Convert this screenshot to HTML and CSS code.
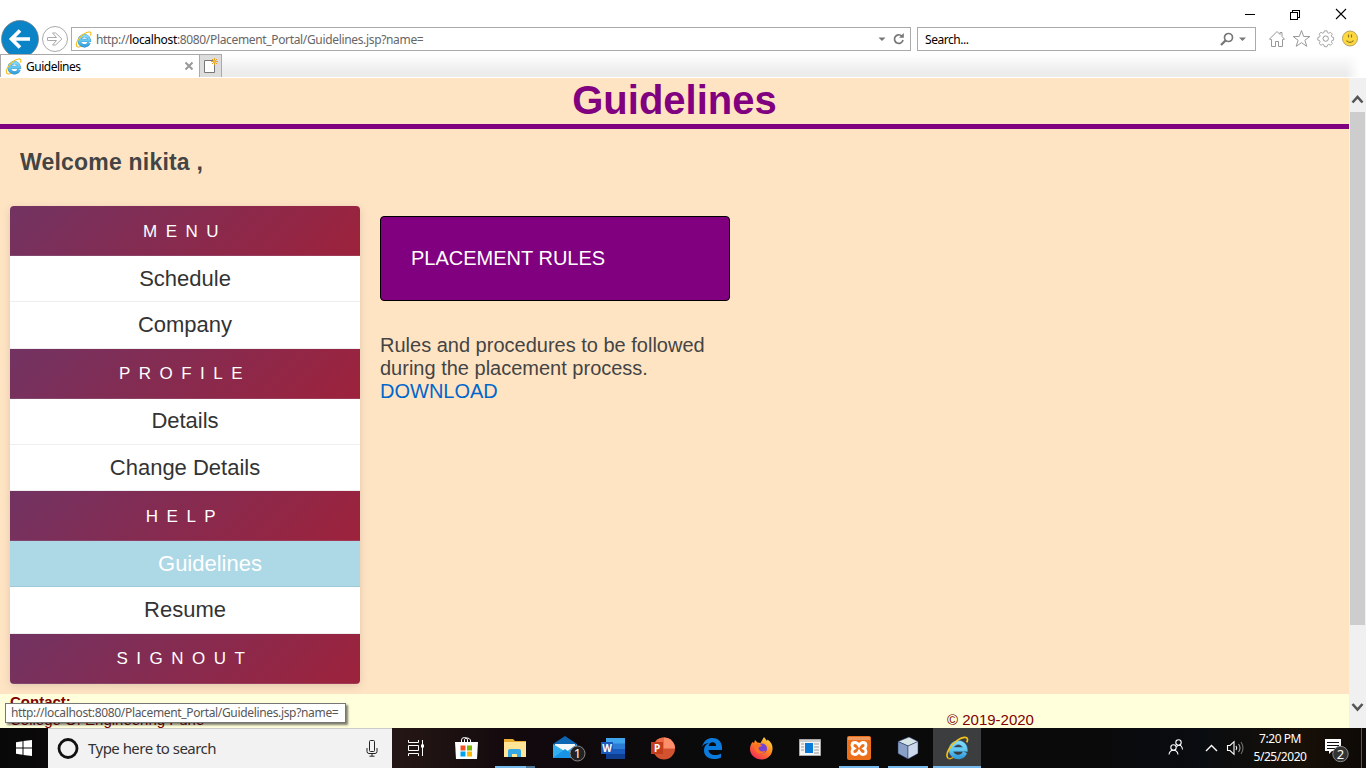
FILE: index.html
```html
<!DOCTYPE html>
<html lang="en">
<head>
<meta charset="utf-8">
<title>Guidelines</title>
<link rel="stylesheet" href="styles.css">
</head>
<body>
<svg class="defs" width="0" height="0" aria-hidden="true">
  <defs>
    <linearGradient id="ie-blue" x1="0" y1="0" x2="0" y2="1"><stop offset="0" stop-color="#7fd8f8"/><stop offset=".5" stop-color="#63c8f0"/><stop offset="1" stop-color="#35a0e0"/></linearGradient>
    <linearGradient id="fox" x1=".9" y1="0" x2=".2" y2="1"><stop offset="0" stop-color="#ffe24a"/><stop offset=".45" stop-color="#ff8a1e"/><stop offset="1" stop-color="#f3245c"/></linearGradient>
    <symbol id="ie" viewBox="0 0 16 16">
      <path d="M13.300 10.900A4.800 4.800 0 1 1 13.600 8.900H5" fill="none" stroke="#3d8fc4" stroke-width="3.100"/>
      <path d="M13.300 10.900A4.800 4.800 0 1 1 13.600 8.900H5" fill="none" stroke="url(#ie-blue)" stroke-width="2.400"/>
      <path d="M2.200 15C-.6 12.500 3.800 5.600 8.600 2.600 11.800.6 14.600.3 15 2c.1.700-.1 1.400-.5 2.200" fill="none" stroke="#f3c21c" stroke-width="1.100"/>
      <path d="M2.200 15c.9.400 2.200 0 3.400-.8" fill="none" stroke="#e0a818" stroke-width=".9"/>
    </symbol>
  </defs>
</svg>

<header class="chrome">
  <div class="titlebar">
    <svg width="110" height="16" viewBox="0 0 110 16" fill="none" stroke="#000" shape-rendering="crispEdges"><path d="M0 8.500h10M45.500 6.500h7v7h-7zM47.500 6v-2h7v7h-2"/><path d="M91 3l10 10M101 3L91 13" shape-rendering="auto" stroke-width="1.100"/></svg>
  </div>
  <div class="navrow">
    <svg class="back" width="40" height="38" viewBox="0 0 40 38"><circle cx="20" cy="19" r="18.500" fill="#0a84c6" stroke="#777" stroke-width=".7"/><path d="M30 19H13M20 10.500L11.500 19l8.500 8.500" fill="none" stroke="#fff" stroke-width="3.700"/></svg>
    <svg class="forward" width="28" height="28" viewBox="0 0 28 28" fill="none" stroke="#aaa"><circle cx="13" cy="14" r="12.500"/><path d="M5.500 12.500h9l-4-4.500h3.200l6.200 6-6.200 6h-3.200l4-4.500h-9z"/></svg>
    <div class="address">
      <svg width="17" height="17"><use href="#ie"/></svg>
      <span class="url">http://<b>localhost</b>:8080/Placement_Portal/Guidelines.jsp?name=</span>
      <svg width="30" height="16" viewBox="0 0 30 16"><path d="M2.500 6.500h7L6 10z" fill="#777"/><path d="M26 5.200A4.300 4.300 0 1 0 27 9" fill="none" stroke="#777" stroke-width="1.700"/><path d="M23 6.800h4.800V2z" fill="#777"/></svg>
    </div>
    <div class="search">
      <span>Search...</span>
      <svg width="30" height="16" viewBox="0 0 30 16"><circle cx="8.500" cy="6.500" r="4" fill="none" stroke="#777" stroke-width="1.700"/><path d="M5.500 9.500L1 14" stroke="#777" stroke-width="2.300"/><path d="M19 6.500h7L22.500 10z" fill="#777"/></svg>
    </div>
    <svg class="tools" width="92" height="20" viewBox="0 0 92 20" fill="none" stroke="#999">
      <path d="M3.500 10.500L1.500 10.200 9 2.500l3 3v-2h2v4l2.500 2.700-2 .3v7h-4v-5h-3v5h-4z"/>
      <path d="M33.500 1.500l2.200 6h6.100l-4.900 3.800 1.900 6-5.300-3.600-5.300 3.600 1.900-6-4.900-3.800h6.100z"/>
      <path d="M56.500 2h3l.5 2 1.500.7 1.900-1.100 2.100 2.100-1.100 1.900.6 1.400 2 .5v3l-2 .5-.6 1.400 1.100 1.900-2.100 2.100-1.900-1.100-1.500.7-.5 2h-3l-.5-2-1.500-.7-1.900 1.100-2.100-2.100 1.100-1.900-.6-1.400-2-.5v-3l2-.5.6-1.400-1.100-1.900 2.100-2.100 1.900 1.100L56 4z" transform="translate(6.700 .1) scale(.88)"/><circle cx="57.700" cy="9.600" r="2.700"/>
      <circle cx="82" cy="9.500" r="7.500" fill="#ffd83d" stroke="#b5a36a"/><path d="M80.500 5.500v3M83.500 5.500v3M78.500 11.500c1.500 2.500 5.500 2.500 7 0" stroke="#8b7429" stroke-width="1.200"/>
    </svg>
  </div>
  <div class="tabs">
    <div class="tab">
      <svg width="17" height="17"><use href="#ie"/></svg>
      <span>Guidelines</span>
      <svg width="10" height="10" viewBox="0 0 10 10"><path d="M1.500 1.500l7 7M8.500 1.500l-7 7" stroke="#999" stroke-width="2"/></svg>
    </div>
    <div class="newtab"><svg width="18" height="18" viewBox="0 0 18 18"><path d="M2.500 3.500h10v12h-10z" fill="#fff" stroke="#777"/><path d="M12.500 1v7M9 4.500h7M10 2l5 5M15 2l-5 5" stroke="#e8a020" stroke-width="1"/><circle cx="12.500" cy="4.500" r="1.600" fill="#f5b83a"/></svg></div>
  </div>
</header>

<div class="viewport">
  <main class="page">
    <h1 class="title">Guidelines</h1>
    <h2 class="welcome">Welcome nikita ,</h2>
    <div class="columns">
      <nav class="menu">
        <div class="head low">MENU</div>
        <a class="item">Schedule</a>
        <a class="item tall">Company</a>
        <div class="head">PROFILE</div>
        <a class="item raised">Details</a>
        <a class="item">Change Details</a>
        <div class="head low">HELP</div>
        <a class="item active">Guidelines</a>
        <a class="item tall">Resume</a>
        <div class="head">SIGNOUT</div>
      </nav>
      <section class="content">
        <div class="card">PLACEMENT RULES</div>
        <p class="text">Rules and procedures to be followed during the placement process.<br><a class="download">DOWNLOAD</a></p>
      </section>
    </div>
    <footer class="footer">
      <div class="contact"><b>Contact:</b><br>College Of Engineering Pune</div>
      <div class="copy">© 2019-2020</div>
    </footer>
  </main>
  <div class="scrollbar">
    <svg width="17" height="34" viewBox="0 0 17 34"><path d="M3.500 24.500l5-5.500 5 5.500" fill="none" stroke="#555" stroke-width="2.600"/></svg>
    <div class="thumb"></div>
    <svg width="17" height="34" viewBox="0 0 17 34"><path d="M3.500 10l5 5.500 5-5.500" fill="none" stroke="#555" stroke-width="2.600"/></svg>
  </div>
  <div class="status">http://localhost:8080/Placement_Portal/Guidelines.jsp?name=</div>
</div>

<footer class="taskbar">
  <div class="start"><svg width="16" height="16" viewBox="0 0 16 16" fill="#fff"><path d="M0 2.200L6.500 1.300v6.200H0zM7.500 1.100L16 0v7.500H7.500zM0 8.500h6.500v6.200L0 13.800zM7.500 8.500H16V16l-8.500-1.100z"/></svg></div>
  <div class="tasksearch">
    <svg width="22" height="22" viewBox="0 0 22 22"><circle cx="11" cy="10.500" r="9" fill="none" stroke="#111" stroke-width="2.800"/></svg>
    <span>Type here to search</span>
    <svg width="12" height="17" viewBox="0 0 12 17" fill="none" stroke="#222"><rect x="3.500" y=".5" width="5" height="11" rx="1"/><path d="M1 8v3.500q0 2 2 2h6q2 0 2-2V8M6 13.500V16M3.500 16.200h5"/></svg>
  </div>
  <div class="apps">
    <div class="app"><svg width="24" height="24" viewBox="0 0 24 24" fill="none" stroke="#fff"><path d="M3.500 4v2.500h10V4M3.500 20v-2.500h10V20M3.500 9.500h10v5h-10zM17.500 4v16"/><path d="M16 8.500h3v3h-3z" fill="#fff" stroke="none"/></svg></div>
    <div class="app"><svg width="24" height="24" viewBox="0 0 24 24"><path d="M7.500 6.500V4q0-2.500 3-2.500T13.500 4v2.500M10.500 6V3.500q0-1.500 2.500-1.500t3.500 2v2.500" fill="none" stroke="#fff"/><path d="M1 6h23l-1 17H2z" fill="#fff"/><path d="M6.500 9.500h5v5h-5z" fill="#f05022"/><path d="M13 9.500h5v5h-5z" fill="#7db800"/><path d="M6.500 15.500h5v5h-5z" fill="#00a3ee"/><path d="M13 15.500h5v5h-5z" fill="#ffb800"/></svg></div>
    <div class="app open split"><svg width="24" height="24" viewBox="0 0 24 24"><path d="M1 3h9l2 2h11v16H1z" fill="#e9ad32"/><path d="M1 6h22v15H1z" fill="#ffe595"/><path d="M5 21v-6q0-2 2-2h9q2 0 2 2v6h-4v-3H9v3z" fill="#35a8e8"/></svg></div>
    <div class="app mail"><svg width="34" height="28" viewBox="0 0 34 28"><path d="M1 10L13 2l12 8v14H1z" fill="#0d66b4"/><path d="M3 10h20v4l-9 7-11-7z" fill="#f4f7fa"/><path d="M1 10l13 8 11-8v14H1z" fill="#32b0f0"/><path d="M1 24l12-9 12 9z" fill="#1993e6"/><circle cx="25.500" cy="19.500" r="7.500" fill="#222" stroke="#888"/><text x="25.500" y="24" text-anchor="middle" class="badge">1</text></svg></div>
    <div class="app"><svg width="24" height="24" viewBox="0 0 24 24"><path d="M5 2h19v6H5z" fill="#41a5ee"/><path d="M5 7.500h19V13H5z" fill="#2b7cd3"/><path d="M5 13h19v5H5z" fill="#185abd"/><path d="M5 18h19v5H5z" fill="#103f91"/><path d="M0 6h12v12H0z" fill="#185abd"/><text x="6" y="15.500" text-anchor="middle" class="office">W</text></svg></div>
    <div class="app"><svg width="24" height="24" viewBox="0 0 24 24"><circle cx="13" cy="12.500" r="11" fill="#d35230"/><path d="M13 1.500v11h11a11 11 0 0 0-11-11z" fill="#ff8f6b"/><path d="M13 1.500a11 11 0 0 0-11 11h11z" fill="#ed6c47"/><path d="M0 6h12v12H0z" fill="#c43e1c"/><text x="6.200" y="15.500" text-anchor="middle" class="office">P</text></svg></div>
    <div class="app"><svg width="24" height="24" viewBox="0 0 24 24"><path d="M2 11C4 4 8 2 12.500 2 19 2 22 7 22 11v3H8.500c.3 3.500 3.200 5 6.200 5 2.500 0 4.700-.6 6.300-1.600v4c-2 1.200-4.600 1.700-7.200 1.700-6 0-10-3.500-9.800-9 .1-3.700 2.200-6 5-7C5 7.500 3 9 2 11zm6.700-1h7.400c0-2.500-1.300-3.800-3.400-3.800S9 7.700 8.700 10z" fill="#0a7bdc"/></svg></div>
    <div class="app"><svg width="24" height="24" viewBox="0 0 24 24"><path d="M3.500 6l1.500 1 1-3 2.500 2.500 3 .5L15 1l3 4 .5-1.500C22 6 24 9 23.500 13.500c-.6 6-5 10-11 10S1 19 1 13c0-3 1-5 2.500-7z" fill="url(#fox)"/><circle cx="13" cy="12.500" r="5" fill="#7542d8"/><path d="M5 8.500c3-1 6-1 8 1-1 1-2.500 1.500-3.500 2 0 4 4 5 7 3-1.500 4-8 4-10 0-1-2-1.500-4-1.500-6z" fill="#ff751f"/></svg></div>
    <div class="app"><svg width="22" height="18" viewBox="0 0 22 18"><path d="M.5.500h21v16H.5z" fill="#f4f4f4" stroke="#aaa"/><path d="M1 1h20v2H1z" fill="#ccc"/><path d="M6 4h8v10H6z" fill="#087bd8"/><path d="M2 5h3M2 8h3M2 11h3M15 5h5M15 8h5M15 11h5M15 14h5" stroke="#999"/></svg></div>
    <div class="app open"><svg width="24" height="24" viewBox="0 0 24 24"><rect width="24" height="24" rx="2" fill="#ec701b"/><path d="M1 1h22v3H1z" fill="#f09a60"/><path d="M12 9.500C10.500 7 9.500 6.500 8 6.500q-3 0-3 3 0 1.800 2 3-2 1.200-2 3 0 3 3 3c1.500 0 2.500-.5 4-3 1.500 2.500 2.500 3 4 3q3 0 3-3 0-1.800-2-3 2-1.200 2-3 0-3-3-3c-1.500 0-2.500.5-4 3z" fill="none" stroke="#fff" stroke-width="2.800"/></svg></div>
    <div class="app open"><svg width="24" height="24" viewBox="0 0 24 24" stroke="#263566" stroke-width=".5"><path d="M2 5.500L13 1l9 4.500L12 10z" fill="#d6e5e5"/><path d="M2 5.500L12 10v13L2 17.500z" fill="#88a0c6"/><path d="M12 10l10-4.500v12L12 23z" fill="#ccd8ec"/></svg></div>
    <div class="app open current"><svg width="24" height="24"><use href="#ie"/></svg></div>
  </div>
  <div class="tray">
    <svg class="icons" width="75" height="20" viewBox="0 0 75 20" fill="none" stroke="#fff" stroke-width="1.100"><circle cx="5.500" cy="9.500" r="2.700"/><path d="M1 16.500q.5-4.300 4.500-4.300t4.500 4.300"/><circle cx="10.500" cy="4.500" r="2.700"/><path d="M8.500 9q1-1.700 2.800-1.700 2.700 0 3.200 4.200"/><path d="M38 13l5.500-5.500L49 13" stroke-width="1.400"/><path d="M59.500 7.500h2.500l4-3.800v12.600l-4-3.800h-2.500z"/><path d="M68 8q1.500 2 0 4"/><path d="M70.500 6q3 4 0 8" opacity=".65"/><path d="M73 4q4 6 0 12" opacity=".4"/></svg>
    <div class="clock"><span>7:20 PM</span><span>5/25/2020</span></div>
    <svg class="notify" width="26" height="26" viewBox="0 0 26 26"><path d="M1 2h16v12H8l-3 3v-3H1z" fill="#fff"/><path d="M3 5.500h12M3 8.500h12M3 11.500h8" stroke="#111"/><circle cx="16.500" cy="17" r="7.700" fill="#333" stroke="#888"/><text x="16.500" y="21.500" text-anchor="middle" class="badge">2</text></svg>
    <div class="peek"></div>
  </div>
</footer>
</body>
</html>
```
FILE: styles.css
```css
* { box-sizing: border-box; }
body { margin: 0; width: 1366px; height: 768px; overflow: hidden; display: flex; flex-direction: column; background: #fff; font-family: "Liberation Sans", Arial, sans-serif; }
svg { display: block; flex: none; }
.defs { position: absolute; }

/* Browser chrome */
.chrome { height: 78px; flex: none; display: flex; flex-direction: column; font: 12px "Noto Sans", sans-serif; }
.titlebar { height: 27px; flex: none; display: flex; justify-content: flex-end; padding: 6px 11px 0 0; }
.navrow { height: 24px; flex: none; display: flex; align-items: center; margin-bottom: 3px; }
.back { margin-right: 2px; }
.forward { margin-right: 1px; }
.address { width: 840px; height: 24px; border: 1px solid #aaa; display: flex; align-items: center; padding: 0 4px 0 3px; margin-right: 6px; }
.url { flex: 1; margin-left: 4px; color: #666; white-space: nowrap; letter-spacing: -.34px; }
.url b { font-weight: 400; color: #000; }
.search { width: 339px; height: 24px; border: 1px solid #aaa; display: flex; align-items: center; justify-content: space-between; padding: 0 5px 0 7px; }
.search span { letter-spacing: -.45px; }
.tools { margin: -1px 0 0 12px; }
.tabs { height: 23px; display: flex; background: linear-gradient(90deg, transparent 1346px, #fff 1360px), linear-gradient(#fff, #ececec 80%); position: relative; }
.tab { width: 200px; border: 1px solid #aaa; border-bottom: 0; background: #fff; display: flex; align-items: center; padding: 0 5px 0 4px; }
.tab span { flex: 1; margin-left: 4px; letter-spacing: -.5px; }
.newtab { width: 22px; border: 1px solid #aaa; border-left: 0; border-bottom: 0; background: #ddd; padding: 2px 0 0 2px; }

/* Web page */
.viewport { height: 650px; flex: none; display: flex; position: relative; }
.page { width: 1349px; height: 650px; overflow: hidden; background: #ffe4c4; color: #444; }
.title { margin: 0; height: 51px; border-bottom: 5px solid purple; color: purple; font-size: 40px; line-height: 45px; text-align: center; }
.welcome { margin: 0; padding: 19px 20px 0; height: 77px; font-size: 23px; line-height: 28px; letter-spacing: .2px; }
.columns { display: flex; gap: 20px; padding-left: 10px; height: 488px; }
.menu { width: 350px; height: 478px; border-radius: 4px; overflow: hidden; box-shadow: 0 2px 10px rgba(0,0,0,.13); text-align: center; }
.head { height: 50px; line-height: 50px; border-bottom: 1px solid rgba(255,255,255,.1); background: linear-gradient(135deg, #723362, #9d223c); color: #fff; font-size: 17px; letter-spacing: 8.5px; }
.low { line-height: 52px; }
.item { display: block; height: 46px; line-height: 46px; border-bottom: 1px solid #eee; background: #fff; color: #333; font-size: 22px; }
.tall { height: 47px; }
.raised { line-height: 44px; }
.active { background: #add8e6; border-color: #9fcadb; color: #fff; padding-left: 50px; }
.content { width: 350px; padding-top: 10px; }
.card { height: 85px; border: 1px solid #000; border-radius: 4px; background: purple; color: #fff; padding: 30px; font-size: 20px; line-height: 23px; }
.text { margin: 33px 0 0; font-size: 20px; line-height: 23px; }
.download { color: #06c; }
.footer { height: 70px; background: #ffffdc; color: #800000; font-size: 15px; line-height: 18px; display: flex; padding-left: 10px; }
.contact { width: 937px; margin-top: -1px; }
.copy { padding-top: 17px; }
.scrollbar { width: 17px; background: #f0f0f0; display: flex; flex-direction: column; }
.thumb { height: 513px; width: 15px; margin: 0 1px auto; background: #cdcdcd; }
.status { position: absolute; left: 5px; top: 625px; width: 341px; height: 20px; border: 1px solid #767676; background: #fff; box-shadow: 2px 2px 2px rgba(0,0,0,.5); color: #575757; font: 12px/18px "Noto Sans", sans-serif; letter-spacing: -.34px; padding-left: 5px; white-space: nowrap; }

/* Taskbar */
.taskbar { height: 40px; flex: none; display: flex; background: linear-gradient(90deg, #080808 0, #241614 400px, #12090d 520px, #0a0a0b 700px, #0a0a0b 1100px, #090c10 1200px, #171008 1300px, #0d0906); color: #fff; font-family: "Noto Sans", sans-serif; }
.start { width: 48px; display: grid; place-items: center; }
.tasksearch { width: 344px; background: #f2f2f2; border-top: 1px solid #ccc; color: #333; display: flex; align-items: center; padding: 0 14px 0 9px; font-size: 15px; }
.tasksearch span { flex: 1; margin: -2px 0 0 9px; letter-spacing: -.53px; }
.apps { display: flex; }
.app { width: 49.100px; height: 40px; display: grid; place-items: center; padding-left: 1px; }
.mail { padding-left: 10px; }
.open { background: linear-gradient(#76b9ed, #76b9ed) 5px 100% / 40px 2px no-repeat; }
.split { background-image: linear-gradient(90deg, #76b9ed 31px, #4b7495 31px); }
.current { width: 48px; margin-left: 1px; padding: 0; background: linear-gradient(#76b9ed, #76b9ed) 0 100% / 48px 2px no-repeat, #3c3d3e; }
.tray { margin-left: auto; display: flex; align-items: center; }
.icons { overflow: visible; }
.clock { width: 72px; display: flex; flex-direction: column; text-align: center; font-size: 12px; line-height: 17.500px; letter-spacing: -.45px; margin: -1px 0 0 1px; }
.notify { margin: 3px 0 0 8px; }
.peek { width: 5px; height: 40px; margin-left: 11px; border-left: 1px solid #555; }
.badge { font: 13px "Noto Sans", sans-serif; fill: #fff; }
.office { font: bold 10px "Noto Sans", sans-serif; fill: #fff; }
```
